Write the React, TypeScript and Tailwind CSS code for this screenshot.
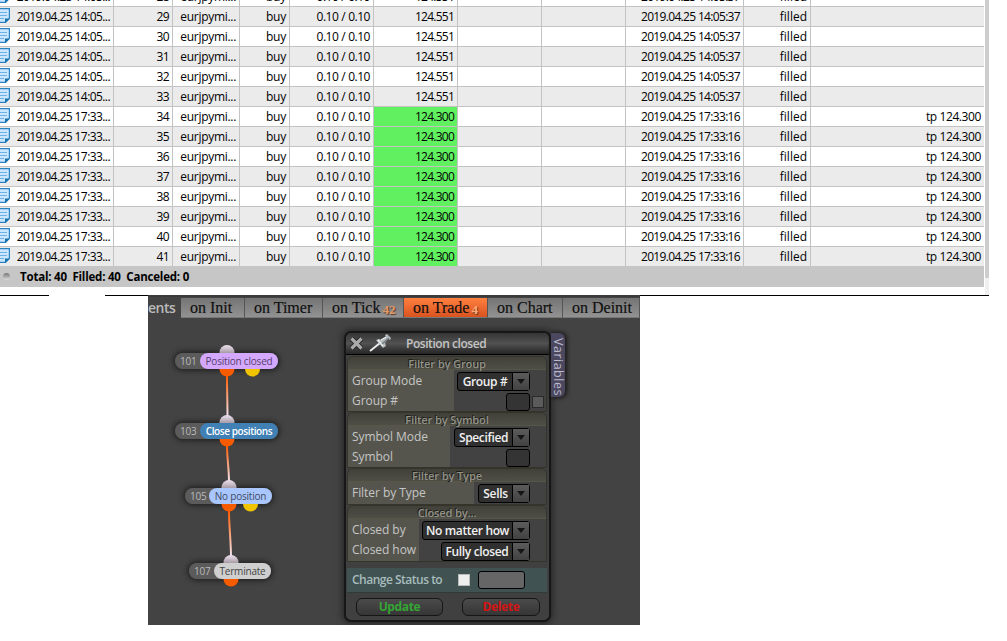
import clsx from "clsx"
import type { ReactNode } from "react"

const COLUMNS =
  "grid grid-cols-[114px_59px_67px_50px_84px_84px_84px_84px_118px_67px_173px]"

const ORDERS = Array.from({ length: 14 }, (_, index) => {
  const id = 28 + index
  const closed = id >= 34
  return {
    id,
    opened: closed ? "2019.04.25 17:33..." : "2019.04.25 14:05...",
    price: closed ? "124.300" : "124.551",
    time: closed ? "2019.04.25 17:33:16" : "2019.04.25 14:05:37",
    comment: closed ? "tp 124.300" : "",
    closed,
  }
})

type Order = (typeof ORDERS)[number]

function NoteIcon() {
  return (
    <svg className="absolute top-px left-0" width="11" height="16" viewBox="0 0 11 16">
      <path d="M-1 .6H9.4V10.5L5.5 14.4H-1Z" fill="#cbe6ff" stroke="#2a84c4" strokeWidth="1.2" />
      <path d="M5 14.9V10.5H9.9Z" fill="#1673b0" />
      <path d="M0 4.5H7M0 7.5H7M0 10.5H4" stroke="#6fb1e2" strokeWidth="1" />
    </svg>
  )
}

function Cell({ className, children }: { className?: string; children?: ReactNode }) {
  return (
    <span
      className={clsx(
        "block overflow-hidden border-r border-[#c3c3c3] pr-[3px] text-right whitespace-nowrap",
        className,
      )}
    >
      {children}
    </span>
  )
}

function OrderRow({ order }: { order: Order }) {
  return (
    <div
      className={clsx(
        COLUMNS,
        "h-5 border-b border-[#c3c3c3] leading-[20px]",
        order.id % 2 ? "bg-[#ebebeb]" : "bg-white",
      )}
    >
      <Cell className="relative tracking-[-0.58px]">
        <NoteIcon />
        {order.opened}
      </Cell>
      <Cell className="tracking-[-0.55px]">{order.id}</Cell>
      <Cell className="tracking-[-0.3px]">eurjpymi...</Cell>
      <Cell className="tracking-[-0.2px]">buy</Cell>
      <Cell className="tracking-[-0.5px] [word-spacing:0.4px]">0.10 / 0.10</Cell>
      <Cell className={clsx("tracking-[-0.75px]", order.closed && "bg-[#60f060]")}>
        {order.price}
      </Cell>
      <Cell />
      <Cell />
      <Cell className="tracking-[-0.67px]">{order.time}</Cell>
      <Cell>filled</Cell>
      <Cell className="border-r-0 pr-1 tracking-[-0.4px]">{order.comment}</Cell>
    </div>
  )
}

function OrdersTable() {
  return (
    <section className="flex h-[295px] w-[989px] justify-between overflow-hidden font-['Open_Sans',sans-serif] text-[12px] text-black">
      <div className="-mt-[13px] w-[984px]">
        {ORDERS.map((order) => (
          <OrderRow key={order.id} order={order} />
        ))}
        <footer className="-mt-px flex h-[21px] items-center bg-[#c6c6c6] text-[11.5px] font-bold tracking-[-0.2px] whitespace-pre">
          <i className="mr-2.5 ml-[3px] size-[7px] rounded-full bg-linear-to-b from-[#777] to-[#ddd]" />
          {"Total: 40  Filled: 40  Canceled: 0"}
        </footer>
      </div>
      <div className="w-1 bg-[#f0f0f0]">
        <div className="h-[278px] bg-[#cdcdcd]" />
      </div>
    </section>
  )
}

const TABS = [
  { label: "on Init", width: "w-16" },
  { label: "on Timer", width: "w-[78px]" },
  { label: "on Tick", width: "w-[81px]", count: 42 },
  { label: "on Trade", width: "w-[84px]", count: 4, active: true },
  { label: "on Chart", width: "w-[75px]" },
  { label: "on Deinit", width: "w-[77px]" },
]

function EventTabs() {
  return (
    <nav className="flex h-[23px] border-t-2 border-[#3a3a3a] pt-px">
      <span className="w-[33px] font-['Open_Sans',sans-serif] text-[14px] leading-[19px] font-semibold tracking-[-0.5px] text-[#bbb]">
        ents
      </span>
      {TABS.map((tab) => (
        <div
          key={tab.label}
          className={clsx(
            "flex h-5 shrink-0 border-r border-r-[#555] border-b border-b-[#777] pl-[9px] font-['Liberation_Serif',serif] text-[16px] leading-[20px] whitespace-nowrap text-[#111] [-webkit-text-stroke:0.2px_#111]",
            tab.width,
            tab.active
              ? "bg-linear-to-b from-[#ff8040] to-[#d9531e]"
              : "bg-linear-to-b from-[#747474] to-[#929292]",
          )}
        >
          {tab.label}
          {tab.count && (
            <small
              className={clsx(
                "ml-0.5 pt-1 text-[13px] leading-4 font-bold [-webkit-text-stroke:0] [text-shadow:1px_1px_1px_#5a3a28]",
                tab.active ? "text-[#ffac7b]" : "text-[#e09a68]",
              )}
            >
              {tab.count}
            </small>
          )}
        </div>
      ))}
    </nav>
  )
}

const NODES = [
  { id: 101, label: "Position closed", x: 27, y: 58, width: 103, idWidth: 25, port: 52, alt: 77.5, color: "bg-[#d4a8ff] text-[#54406a] tracking-[-0.2px]" },
  { id: 103, label: "Close positions", x: 27, y: 128, width: 103, idWidth: 25, port: 52, color: "bg-[#4080b5] text-white font-semibold tracking-[-0.4px]" },
  { id: 105, label: "No position", x: 37, y: 193, width: 87, idWidth: 24, port: 44, alt: 65.5, color: "bg-[#a9c6ff] text-[#3f4b60] tracking-[-0.2px]" },
  { id: 107, label: "Terminate", x: 41, y: 268, width: 82, idWidth: 25, port: 42, color: "bg-[#cfcfcf] text-[#444] tracking-[-0.2px]" },
]

function Ports() {
  return (
    <svg className="absolute top-0 left-0" width="180" height="330">
      <defs>
        <linearGradient id="wire" x1="0" y1="0" x2="0" y2="1">
          <stop offset="0" stopColor="#ff5a00" />
          <stop offset="1" stopColor="#f4e6f4" />
        </linearGradient>
        <linearGradient id="input" x1="0" y1="0" x2="0" y2="1">
          <stop offset="0" stopColor="#eee2f0" />
          <stop offset="0.5" stopColor="#aaa0aa" />
        </linearGradient>
      </defs>
      <g fill="none" stroke="url(#wire)" strokeWidth="2">
        <path d="M79 81C79 95 79.5 108 79.5 122" />
        <path d="M79 151C79 162 81 174 81 187" />
        <path d="M81 216C81 230 83 247 83 262" />
      </g>
      {NODES.map((node) => (
        <g key={node.id}>
          <circle cx={node.x + node.port} cy={node.y - 0.5} r="7.5" fill="url(#input)" />
          <circle cx={node.x + node.port} cy={node.y + 16} r="7.5" fill="#f75b00" />
          {node.alt && <circle cx={node.x + node.alt} cy={node.y + 16} r="7.5" fill="#efc300" />}
        </g>
      ))}
    </svg>
  )
}

function Diagram() {
  return (
    <div className="font-['Open_Sans',sans-serif] text-[10px] leading-4">
      {/* Shadows sit under the ports, pills over them */}
      {NODES.map((node) => (
        <i
          key={node.id}
          className="absolute h-4 rounded-full shadow-[0_0_5px_2px_#242424]"
          style={{ left: node.x, top: node.y, width: node.width }}
        />
      ))}
      <Ports />
      {NODES.map((node) => (
        <div
          key={node.id}
          className="absolute flex h-4 rounded-full bg-[#5b5b5b] text-[#bababa]"
          style={{ left: node.x, top: node.y, width: node.width }}
        >
          <span className="pl-[5px] tracking-[-0.2px]" style={{ width: node.idWidth }}>
            {node.id}
          </span>
          <span className={clsx("flex-1 rounded-full text-center whitespace-nowrap", node.color)}>
            {node.label}
          </span>
        </div>
      ))}
    </div>
  )
}

function Select({ width, children }: { width: string; children: ReactNode }) {
  return (
    <div
      className={clsx(
        "flex h-[19px] rounded-[3px] border border-black bg-[#303030] leading-[17px] text-[#f0f0f0]",
        width,
      )}
    >
      <span className="flex-1 text-center font-semibold tracking-[-0.35px] whitespace-nowrap">
        {children}
      </span>
      <span className="flex w-[17px] items-center justify-center border-l border-black bg-linear-to-b from-[#5c5c5c] to-[#424242]">
        <i className="border-x-[4px] border-t-[5px] border-x-transparent border-t-[#151515]" />
      </span>
    </div>
  )
}

function TextField() {
  return <div className="h-[18px] w-6 rounded-[3px] border border-black bg-[#343434]" />
}

function Group({ title, height, labelWidth, labels, children }: {
  title: string
  height: string
  labelWidth: string
  labels: string[]
  children: ReactNode
}) {
  return (
    <section
      className={clsx(
        "flex flex-col rounded-t-md border border-[#34342a] bg-[#424242]",
        height,
      )}
    >
      <h3 className="h-[13px] shrink-0 rounded-t-md border-b border-[#565649] bg-linear-to-b from-[#414139] to-[#4e4e47] text-center text-[11px] leading-[13px] font-semibold tracking-[-0.1px] text-[#929287] [text-shadow:-1px_-1px_#1d1d1a]">
        {title}
      </h3>
      <div className="flex min-h-0 flex-1">
        <div className={clsx("shrink-0 bg-[#55554d] pl-1 text-[#c5c5c5]", labelWidth)}>
          {labels.map((label) => (
            <p key={label} className="h-5 leading-[21px] tracking-[-0.05px] whitespace-nowrap">
              {label}
            </p>
          ))}
        </div>
        <div className="flex min-w-0 flex-1 flex-col items-end gap-0.5 pt-0.5 pr-4">
          {children}
        </div>
      </div>
    </section>
  )
}

function PanelHeader() {
  return (
    <header className="flex h-[22px] items-center rounded-t-md border-b border-black bg-linear-to-b from-[#353535] via-[#525252] to-[#252525]">
      <svg className="ml-1" width="13" height="13" viewBox="0 0 13 13">
        <path d="M1.5 1.5 11.5 11.5M11.5 1.5 1.5 11.5" stroke="#202020" strokeWidth="5" />
        <path d="M1.5 1.5 11.5 11.5M11.5 1.5 1.5 11.5" stroke="#aaa" strokeWidth="3.2" />
      </svg>
      <svg className="ml-1.5" width="23" height="19" viewBox="0 0 23 19">
        <path d="M1 17 11 9" stroke="#f0f0f0" strokeWidth="1.8" />
        <path d="M7 6 10 5 13 6 17 3 16 1 18 0 22 4 21 6 19 5 16 9 17 12 14 14Z" fill="#b4bbbf" />
        <path d="M9 6 14 12M12 6 17 3" stroke="#f3f3f3" strokeWidth="1.2" />
        <path d="M13 10 20 4" stroke="#70777b" strokeWidth="1.3" />
      </svg>
      <h2 className="ml-3.5 text-[12px] font-semibold tracking-[-0.45px] text-[#c4c4c4]">
        Position closed
      </h2>
    </header>
  )
}

function SettingsPanel() {
  return (
    <div className="absolute top-9 left-[196px] flex items-start font-['Open_Sans',sans-serif] text-[12px]">
      <div className="h-[291px] w-[207px] rounded-[7px] border-2 border-[#171717] bg-[#404040] shadow-[0_0_7px_1px_#222]">
        <PanelHeader />
        <div className="pt-px pr-0.5 pl-px">
          <Group title="Filter by Group" height="h-14" labelWidth="w-[106px]" labels={["Group Mode", "Group #"]}>
            <Select width="w-[73px]">Group #</Select>
            <div className="-mr-3.5 flex items-center gap-0.5">
              <TextField />
              <i className="size-3 border border-[#292929] bg-[#5b5b5b]" />
            </div>
          </Group>
          <Group title="Filter by Symbol" height="h-14" labelWidth="w-[102px]" labels={["Symbol Mode", "Symbol"]}>
            <Select width="w-[76px]">Specified</Select>
            <TextField />
          </Group>
          <Group title="Filter by Type" height="h-[37px]" labelWidth="w-[126px]" labels={["Filter by Type"]}>
            <Select width="w-[52px]">Sells</Select>
          </Group>
          <Group title="Closed by..." height="h-[57px]" labelWidth="w-[71px]" labels={["Closed by", "Closed how"]}>
            <Select width="w-[108px]">No matter how</Select>
            <Select width="w-[89px]">Fully closed</Select>
          </Group>
          <div className="mt-1.5 flex h-[25px] items-center border-b border-[#2d3d35] bg-[#405252] pl-[5px] text-[#a7bcbc]">
            <span className="w-[106px] font-semibold tracking-[-0.5px]">Change Status to</span>
            <i className="size-3 border border-[#bbb] bg-[#eee]" />
            <i className="ml-2 h-[18px] w-[47px] rounded-[3px] border border-black bg-[#666]" />
          </div>
          <div className="mt-[5px] flex justify-between pr-[7px] pl-[9px] text-[12px] leading-4 font-bold tracking-[-0.35px]">
            <button className="h-[18px] w-[87px] rounded-md border border-[#161616] bg-linear-to-b from-[#4b4b4b] to-[#363636] text-[#35a535]">
              Update
            </button>
            <button className="h-[18px] w-[78px] rounded-md border border-[#161616] bg-linear-to-b from-[#4b4b4b] to-[#363636] text-[#d31313]">
              Delete
            </button>
          </div>
        </div>
      </div>
      <div className="mt-0.5 h-16 w-[14px] rounded-r-md bg-[#4a475e] text-[12.5px] leading-[14px] text-[#bbb8cb] shadow-[1px_0_4px_1px_#181818]">
        <span className="block pt-[5px] tracking-[0.5px] [writing-mode:vertical-rl]">Variables</span>
      </div>
    </div>
  )
}

export default function App() {
  return (
    <main className="h-[641px] w-[1007px] overflow-hidden bg-white">
      <OrdersTable />
      <div className="-mb-px flex h-px w-[989px] justify-between">
        <i className="w-[49px] bg-black" />
        <i className="w-[884px] bg-black" />
      </div>
      <section className="relative ml-[148px] h-[330px] w-[492px] overflow-hidden bg-[#434343]">
        <EventTabs />
        <Diagram />
        <SettingsPanel />
      </section>
    </main>
  )
}
